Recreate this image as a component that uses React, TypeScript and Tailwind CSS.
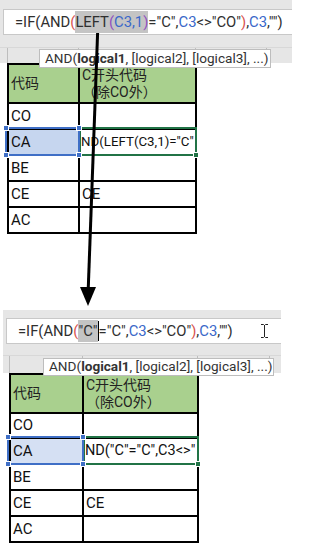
import React from "react";

const D = "text-[#2f2f2f]";
const R = "text-[#d9534f]";
const P = "text-[#9050c0]";
const B = "text-[#3a68c9]";

function Formula1() {
  return (
    <>
      <span className={D}>=IF(AND</span>
      <span className={R}>(</span>
      <span className="flex items-center self-stretch bg-[#c4c4c4] my-[1px]">
        <span className={D}>LEFT</span>
        <span className={P}>(</span>
        <span className={B}>C3,1</span>
        <span className={P}>)</span>
      </span>
      <span className={D}>="C",</span>
      <span className={B}>C3</span>
      <span className={D}>&lt;&gt;"CO"</span>
      <span className={R}>)</span>
      <span className={D}>,</span>
      <span className={B}>C3</span>
      <span className={D}>,"")</span>
    </>
  );
}

function Formula2() {
  return (
    <>
      <span className={D}>=IF(AND</span>
      <span className={R}>(</span>
      <span className="flex items-center self-stretch bg-[#c4c4c4] my-[1px]">
        <span className={D}>"C"</span>
      </span>
      <span className="w-[1px] self-stretch my-[2px] bg-black" />
      <span className={D}>="C",</span>
      <span className={B}>C3</span>
      <span className={D}>&lt;&gt;"CO"</span>
      <span className={R}>)</span>
      <span className={D}>,</span>
      <span className={B}>C3</span>
      <span className={D}>,"")</span>
    </>
  );
}

const CELL =
  "flex items-center pl-[2px] text-[15px] text-[#111] font-['Roboto','Noto_Sans_CJK_SC',sans-serif]";
const HEAD =
  "bg-[#a9d08e] flex items-center pl-[2px] text-[14px] leading-[17px] text-[#222] font-['Roboto','Noto_Sans_CJK_SC',sans-serif]";

function Handle({ pos, color }: { pos: string; color: string }) {
  return <div className={`absolute ${pos} w-[6px] h-[6px] ${color} border border-white`} />;
}

function Table({
  cols,
  rowsTpl,
  fill,
  editText,
  editSize,
}: {
  cols: string;
  rowsTpl: string;
  fill: string;
  editText: string;
  editSize: string;
}) {
  return (
    <div className={`grid ${cols} ${rowsTpl} gap-[2px] bg-black p-[2px] w-fit`}>
      <div className={HEAD}>代码</div>
      <div className={HEAD}>
        <div>
          C开头代码
          <br />
          （除CO外）
        </div>
      </div>
      <div className={`${CELL} bg-white`}>CO</div>
      <div className="bg-white" />
      <div className={`${CELL} relative z-20 ${fill}`}>
        CA
        <div className="absolute -left-[4px] -top-[3px] -right-[2px] -bottom-[2px] border-2 border-[#3f6fc6]">
          <Handle pos="-left-[4px] -top-[4px]" color="bg-[#3f6fc6]" />
          <Handle pos="-right-[4px] -top-[4px]" color="bg-[#3f6fc6]" />
          <Handle pos="-left-[4px] -bottom-[4px]" color="bg-[#3f6fc6]" />
          <Handle pos="-right-[4px] -bottom-[4px]" color="bg-[#3f6fc6]" />
        </div>
      </div>
      <div className="relative z-10 bg-white flex items-center">
        <span
          className={`whitespace-nowrap pl-[1px] ${editSize} text-[#111] font-['Roboto',sans-serif]`}
        >
          {editText}
        </span>
        <div className="absolute -left-[1px] -top-[3px] -right-[2px] -bottom-[2px] border-2 border-[#217346]">
          <Handle pos="-right-[4px] -bottom-[4px]" color="bg-[#217346]" />
        </div>
      </div>
      <div className={`${CELL} bg-white`}>BE</div>
      <div className="bg-white" />
      <div className={`${CELL} bg-white`}>CE</div>
      <div className={`${CELL} bg-white`}>CE</div>
      <div className={`${CELL} bg-white`}>AC</div>
      <div className="bg-white" />
    </div>
  );
}

function Tooltip() {
  return (
    <span className="whitespace-nowrap">
      AND(<b className="font-bold">logical1</b>, [logical2], [logical3], ...)
    </span>
  );
}

export default function App() {
  return (
    <div className="relative w-[292px] h-[554px] overflow-hidden bg-white">
      {/* Panel 1 */}
      <div className="bg-[#e6e6e6] pt-[9px]">
        <div className="ml-[3px] flex h-[26px] items-center border border-r-0 border-[#c8c8c8] bg-white pl-[11px] font-['Roboto',sans-serif] text-[14.8px] whitespace-nowrap overflow-hidden">
          <Formula1 />
        </div>
        <div className="h-[12px]" />
        <div className="flex h-[16px] border-t border-[#d8d8d8]">
          <div className="w-[7px]" />
          <div className="w-[71px] border-l border-[#bdbdbd]" />
          <div className="w-[117px] border-l border-[#bdbdbd]" />
          <div className="w-[71px] border-l border-[#bdbdbd]" />
          <div className="flex-1 border-l border-[#bdbdbd]" />
        </div>
      </div>
      <div className="ml-[7px]">
        <Table
          cols="grid-cols-[69px_115px]"
          rowsTpl="grid-rows-[37px_24px_24px_24px_24px_24px]"
          fill="bg-[#c6d6ef]"
          editText={'ND(LEFT(C3,1)="C"'}
          editSize="text-[13.3px]"
        />
      </div>

      <div className="h-[76px]" />

      {/* Panel 2 */}
      <div className="ml-[3px] w-[278px] bg-[#e6e6e6] pt-[8px]">
        <div className="ml-[3px] flex h-[26px] items-center border border-r-0 border-[#c8c8c8] bg-white pl-[11px] font-['Roboto',sans-serif] text-[14.8px] whitespace-nowrap overflow-hidden">
          <Formula2 />
          <svg className="ml-auto mr-[12px]" width="9" height="16" viewBox="0 0 9 16">
            <path
              d="M1 1.5h2.5M5.5 1.5H8M4.5 2v12M1 14.5h2.5M5.5 14.5H8M3.5 1.5l1 1 1-1M3.5 14.5l1-1 1 1"
              stroke="#222"
              strokeWidth="1"
              fill="none"
            />
          </svg>
        </div>
        <div className="h-[11px]" />
        <div className="flex h-[18px] border-t border-[#d8d8d8]">
          <div className="w-[6px]" />
          <div className="w-[73px] border-l border-[#bdbdbd]" />
          <div className="w-[115px] border-l border-[#bdbdbd]" />
          <div className="w-[72px] border-l border-[#bdbdbd]" />
          <div className="flex-1 border-l border-[#bdbdbd]" />
        </div>
      </div>
      <div className="ml-[9px]">
        <Table
          cols="grid-cols-[71px_113px]"
          rowsTpl="grid-rows-[37px_23px_24px_24px_24px_24px]"
          fill="bg-[#d5e0f3]"
          editText={'ND("C"="C",C3<>"'}
          editSize="text-[14.5px]"
        />
      </div>

      {/* Tooltips */}
      <div className="absolute z-30 left-[39px] top-[49px] w-[232px] h-[19px] flex items-center border border-[#bdbdbd] bg-white pl-[5px] text-[13.6px] leading-none text-[#333] font-['Roboto',sans-serif]">
        <Tooltip />
      </div>
      <div className="absolute z-30 left-[43px] top-[358px] w-[231px] h-[18px] flex items-center border border-[#bdbdbd] bg-white pl-[5px] text-[13.6px] leading-none text-[#333] font-['Roboto',sans-serif]">
        <Tooltip />
      </div>

      {/* Arrow */}
      <svg
        className="absolute z-40 left-0 top-0 pointer-events-none"
        width="292"
        height="554"
        viewBox="0 0 292 554"
      >
        <line x1="97.6" y1="33" x2="88.2" y2="290" stroke="#000" strokeWidth="3" />
        <polygon points="80,287 96,287 88,306" fill="#000" />
      </svg>
    </div>
  );
}
